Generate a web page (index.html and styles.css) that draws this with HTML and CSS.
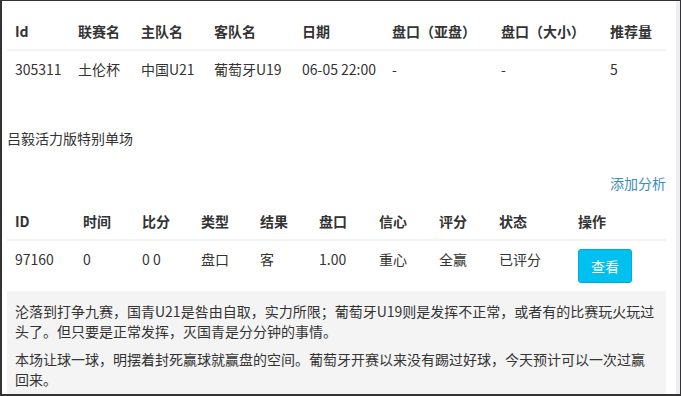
FILE: index.html
```html
<!DOCTYPE html>
<html lang="zh-CN">
<head>
<meta charset="utf-8">
<title>单场</title>
<link rel="stylesheet" href="styles.css">
</head>
<body>
<div class="frame">
  <div class="content">
    <table class="tbl tbl-match">
      <thead>
        <tr><th>Id</th><th>联赛名</th><th>主队名</th><th>客队名</th><th>日期</th><th>盘口（亚盘）</th><th>盘口（大小）</th><th>推荐量</th></tr>
      </thead>
      <tbody>
        <tr><td>305311</td><td>土伦杯</td><td>中国U21</td><td>葡萄牙U19</td><td>06-05 22:00</td><td>-</td><td>-</td><td>5</td></tr>
      </tbody>
    </table>
    <div class="title">吕毅活力版特别单场</div>
    <div class="actions"><a class="link" href="#">添加分析</a></div>
    <table class="tbl tbl-analysis">
      <thead>
        <tr><th>ID</th><th>时间</th><th>比分</th><th>类型</th><th>结果</th><th>盘口</th><th>信心</th><th>评分</th><th>状态</th><th>操作</th></tr>
      </thead>
      <tbody>
        <tr><td>97160</td><td>0</td><td>0 0</td><td>盘口</td><td>客</td><td>1.00</td><td>重心</td><td>全赢</td><td>已评分</td><td><button class="btn">查看</button></td></tr>
      </tbody>
    </table>
    <div class="note">
      <p>沦落到打争九赛，国青U21是咎由自取，实力所限；葡萄牙U19则是发挥不正常，或者有的比赛玩火玩过头了。但只要是正常发挥，灭国青是分分钟的事情。</p>
      <p>本场让球一球，明摆着封死赢球就赢盘的空间。葡萄牙开赛以来没有踢过好球，今天预计可以一次过赢回来。</p>
    </div>
  </div>
  <div class="strip"></div>
</div>
</body>
</html>
```

FILE: styles.css
```css
html, body {
  margin: 0;
  padding: 0;
  background: #fff;
}
body {
  font-family: "Noto Sans CJK SC", "Noto Sans", sans-serif;
  font-size: 14px;
  line-height: 20px;
  color: #333;
}
.frame {
  width: 681px;
  height: 396px;
  box-sizing: border-box;
  border-style: solid;
  border-color: #333;
  border-width: 1px 1px 2px 2px;
  display: flex;
  overflow: hidden;
}
.content {
  flex: 1;
  padding: 12px 10px 0 5px;
  min-width: 0;
}
.strip {
  width: 4px;
  background: #eceef3;
}
.tbl {
  width: 659px;
  table-layout: fixed;
  border-collapse: collapse;
  border-spacing: 0;
}
.tbl th, .tbl td {
  box-sizing: border-box;
  padding: 8px 0 8px 8px;
  text-align: left;
  vertical-align: top;
  white-space: nowrap;
}
.tbl th {
  font-weight: bold;
  border-bottom: 2px solid #f4f4f4;
}
.tbl-match th:nth-child(1) { width: 63px; }
.tbl-match th:nth-child(2) { width: 63px; }
.tbl-match th:nth-child(3) { width: 73px; }
.tbl-match th:nth-child(4) { width: 88px; }
.tbl-match th:nth-child(5) { width: 90px; }
.tbl-match th:nth-child(6) { width: 109px; }
.tbl-match th:nth-child(7) { width: 109px; }
.tbl-match th:nth-child(8) { width: 64px; }

.tbl-analysis th:nth-child(1) { width: 68px; }
.tbl-analysis th:nth-child(2) { width: 59px; }
.tbl-analysis th:nth-child(3) { width: 59px; }
.tbl-analysis th:nth-child(4) { width: 59px; }
.tbl-analysis th:nth-child(5) { width: 59px; }
.tbl-analysis th:nth-child(6) { width: 60px; }
.tbl-analysis th:nth-child(7) { width: 60px; }
.tbl-analysis th:nth-child(8) { width: 60px; }
.tbl-analysis th:nth-child(9) { width: 79px; }
.tbl-analysis th:nth-child(10) { width: 96px; }

.title {
  margin-top: 41px;
}
.actions {
  margin-top: 25px;
  width: 659px;
  text-align: right;
}
.link {
  color: #3c8dbc;
  text-decoration: none;
}
.tbl-analysis {
  margin-top: 10px;
}
.btn {
  font-family: inherit;
  font-size: 14px;
  line-height: 20px;
  color: #fff;
  background: #00c0ef;
  border: 1px solid #00acd6;
  border-radius: 3px;
  padding: 6px 12px;
  margin: 0;
}
.note {
  width: 659px;
  box-sizing: border-box;
  background: #f4f4f4;
  padding: 10px 8px;
}
.note p {
  margin: 0 0 8px;
}
```
